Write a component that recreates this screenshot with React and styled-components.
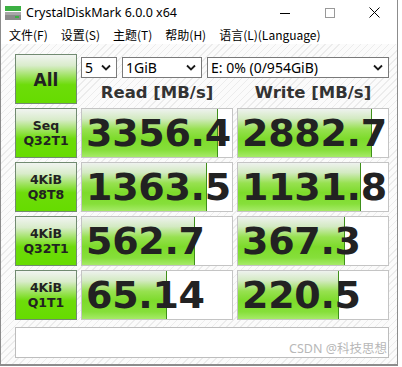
import { Fragment } from "react";
import styled, { createGlobalStyle } from "styled-components";

const GlobalStyle = createGlobalStyle`
  body {
    margin: 0;
    background: #ffffff;
    font-family: "Noto Sans", "Noto Sans CJK SC", sans-serif;
  }
`;

const Window = styled.div`
  width: 396px;
  height: 364px;
  border: 1px solid #8c8c8c;
  border-top: none;
  border-bottom-width: 2px;
  display: flex;
  flex-direction: column;
  position: relative;
  overflow: hidden;
`;

const TitleBar = styled.div`
  height: 25px;
  display: flex;
  align-items: center;
  padding-left: 4px;
  background: #ffffff;
  font-size: 12.5px;
  color: #000;
`;

const TitleText = styled.span`
  margin-left: 5px;
  flex: 1;
`;

const WinButton = styled.div`
  width: 45px;
  height: 25px;
  display: flex;
  align-items: center;
  justify-content: center;
`;

const MenuBar = styled.div`
  height: 19px;
  display: flex;
  align-items: center;
  padding-left: 8px;
  gap: 13px;
  font-family: "Noto Sans CJK SC", sans-serif;
  font-size: 12px;
  color: #000;
  background: #ffffff;
`;

const Content = styled.div`
  flex: 1;
  padding: 10px 0 0 14px;
  background: repeating-linear-gradient(
    135deg,
    #fbfbfb 0px,
    #fbfbfb 4px,
    #ececec 4px,
    #ececec 5px
  );
`;

const Grid = styled.div`
  display: grid;
  grid-template-columns: 62px 152px 152px;
  grid-auto-rows: 50px;
  gap: 4px;
`;

const greenFace = `
  background: linear-gradient(
    to bottom,
    #f1f4f1 0%,
    #d9eccb 22%,
    #9be25a 45%,
    #6ddc0a 62%,
    #66dc00 100%
  );
`;

const AllButton = styled.div`
  ${greenFace}
  border: 1px solid #718a71;
  display: flex;
  align-items: center;
  justify-content: center;
  font-family: "DejaVu Sans", sans-serif;
  font-weight: bold;
  font-size: 17px;
  color: #222;
  padding-top: 1px;
`;

const TopRight = styled.div`
  grid-column: span 2;
  display: flex;
  flex-direction: column;
`;

const SelectRow = styled.div`
  display: flex;
  gap: 5px;
  margin-top: 3px;
`;

const Select = styled.div`
  width: ${(p) => p.$w}px;
  height: 21px;
  box-sizing: border-box;
  border: 1px solid #7a7a7a;
  background: #fff;
  display: flex;
  align-items: center;
  padding: 0 5px 0 3px;
  font-size: 14px;
  color: #000;
`;

const SelectText = styled.span`
  flex: 1;
  line-height: 1;
`;

const Headers = styled.div`
  display: grid;
  grid-template-columns: 152px 152px;
  gap: 4px;
  margin-top: 3px;
`;

const Header = styled.div`
  text-align: center;
  font-family: "DejaVu Sans", sans-serif;
  font-weight: bold;
  font-size: 16.5px;
  color: #333;
  line-height: 24px;
`;

const Label = styled.div`
  ${greenFace}
  border: 1px solid #718a71;
  display: flex;
  flex-direction: column;
  align-items: center;
  justify-content: center;
  font-family: "DejaVu Sans", sans-serif;
  font-weight: bold;
  font-size: 12.5px;
  line-height: 15px;
  color: #222;
`;

const ValueBox = styled.div`
  position: relative;
  border: 1px solid #c4c4c4;
  background: #fff;
  overflow: hidden;
  display: flex;
  align-items: center;
`;

const Fill = styled.div`
  position: absolute;
  left: 0;
  top: 0;
  bottom: 0;
  background: linear-gradient(
    to bottom,
    #eef2ee 0%,
    #d3eac2 20%,
    #97e150 42%,
    #7ddb2b 62%,
    #86df3a 85%,
    #a6ea68 100%
  );
  border-right: 1px solid #3f8f1a;
`;

const ValueText = styled.span`
  position: relative;
  margin-left: 4px;
  font-family: "DejaVu Sans", sans-serif;
  font-weight: bold;
  font-size: 38px;
  letter-spacing: -0.3px;
  color: #222;
  white-space: nowrap;
`;

const Comment = styled.div`
  margin-top: 7px;
  width: 372px;
  height: 29px;
  border: 1px solid #bdbdbd;
  background: #fff;
`;

// watermark sits over the comment box
const Watermark = styled.div`
  position: absolute;
  right: 10px;
  bottom: 7px;
  font-size: 12.5px;
  color: #b8b8b8;
  font-family: "Noto Sans", "Noto Sans CJK SC", sans-serif;
  text-shadow: 0 0 2px #fff;
`;

const Chevron = () => (
  <svg width="10" height="7" viewBox="0 0 10 7">
    <path d="M1 1.5 L5 5.5 L9 1.5" fill="none" stroke="#1a1a1a" strokeWidth="1.8" />
  </svg>
);

const AppIcon = () => (
  <svg width="16" height="16" viewBox="0 0 16 16">
    <rect x="0" y="1" width="16" height="5" fill="#3cb043" />
    <rect x="0" y="7" width="16" height="8" fill="#8a8a8a" />
    <rect x="0" y="7" width="16" height="3" fill="#a8a8a8" />
    <rect x="10" y="11" width="4" height="2" fill="#3cb043" />
  </svg>
);

const rows = [
  { l1: "Seq", l2: "Q32T1", r: "3356.4", rw: 135, w: "2882.7", ww: 133 },
  { l1: "4KiB", l2: "Q8T8", r: "1363.5", rw: 124, w: "1131.8", ww: 122 },
  { l1: "4KiB", l2: "Q32T1", r: "562.7", rw: 112, w: "367.3", ww: 106 },
  { l1: "4KiB", l2: "Q1T1", r: "65.14", rw: 84, w: "220.5", ww: 100 },
];

export default function App() {
  return (
    <>
      <GlobalStyle />
      <Window>
        <TitleBar>
          <AppIcon />
          <TitleText>CrystalDiskMark 6.0.0 x64</TitleText>
          <WinButton>
            <svg width="10" height="10" viewBox="0 0 10 10">
              <path d="M0 5.5 H10" stroke="#000" strokeWidth="1" />
            </svg>
          </WinButton>
          <WinButton>
            <svg width="10" height="10" viewBox="0 0 10 10">
              <rect x="0.5" y="0.5" width="9" height="9" fill="none" stroke="#999" strokeWidth="1" />
            </svg>
          </WinButton>
          <WinButton>
            <svg width="11" height="11" viewBox="0 0 11 11">
              <path d="M0.5 0.5 L10.5 10.5 M10.5 0.5 L0.5 10.5" stroke="#000" strokeWidth="1" />
            </svg>
          </WinButton>
        </TitleBar>
        <MenuBar>
          <span>文件(F)</span>
          <span>设置(S)</span>
          <span>主题(T)</span>
          <span>帮助(H)</span>
          <span>语言(L)(Language)</span>
        </MenuBar>
        <Content>
          <Grid>
            <AllButton>All</AllButton>
            <TopRight>
              <SelectRow>
                <Select $w={36}>
                  <SelectText>5</SelectText>
                  <Chevron />
                </Select>
                <Select $w={80}>
                  <SelectText>1GiB</SelectText>
                  <Chevron />
                </Select>
                <Select $w={182}>
                  <SelectText>E: 0% (0/954GiB)</SelectText>
                  <Chevron />
                </Select>
              </SelectRow>
              <Headers>
                <Header>Read [MB/s]</Header>
                <Header>Write [MB/s]</Header>
              </Headers>
            </TopRight>
            {rows.map((row, i) => (
              <Fragment key={`row-${i}`}>
                <Label>
                  <span>{row.l1}</span>
                  <span>{row.l2}</span>
                </Label>
                <ValueBox>
                  <Fill style={{ width: row.rw }} />
                  <ValueText>{row.r}</ValueText>
                </ValueBox>
                <ValueBox>
                  <Fill style={{ width: row.ww }} />
                  <ValueText>{row.w}</ValueText>
                </ValueBox>
              </Fragment>
            ))}
          </Grid>
          <Comment />
        </Content>
        <Watermark>CSDN @科技思想</Watermark>
      </Window>
    </>
  );
}
